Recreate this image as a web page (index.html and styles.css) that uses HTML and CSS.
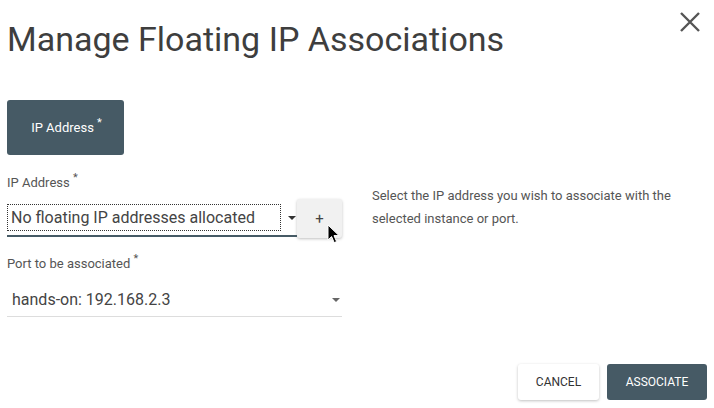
FILE: index.html
```html
<!DOCTYPE html>
<html>
<head>
<meta charset="utf-8">
<link rel="stylesheet" href="styles.css">
</head>
<body>
<div class="dialog">
  <div class="header">
    <h1 class="title">Manage Floating IP Associations</h1>
    <svg class="close" width="22" height="22" viewBox="0 0 22 22"><path d="M2 2L20 20M20 2L2 20" stroke="#555" stroke-width="2.4" fill="none"/></svg>
  </div>
  <div class="tab"><span>IP Address <sup class="req">*</sup></span></div>
  <div class="content">
    <div class="form">
      <div class="label">IP Address <sup class="req">*</sup></div>
      <div class="field-row">
        <div class="select select-focus">
          <div class="select-text">No floating IP addresses allocated</div>
          <span class="caret"></span>
        </div>
        <div class="plus">+</div>
        <svg class="cursor" width="14" height="20" viewBox="0 0 14 20"><path d="M1 1L1 16L4.6 12.6L7.2 18.6L9.6 17.6L7 11.6L12 11.6Z" fill="#000" stroke="#fff" stroke-width="1"/></svg>
      </div>
      <div class="label label-port">Port to be associated <sup class="req">*</sup></div>
      <div class="select select-plain">
        <div class="select-text">hands-on: 192.168.2.3</div>
        <span class="caret"></span>
      </div>
    </div>
    <p class="desc">Select the IP address you wish to associate with the selected instance or port.</p>
  </div>
  <div class="footer">
    <button class="btn btn-cancel">CANCEL</button>
    <button class="btn btn-primary">ASSOCIATE</button>
  </div>
</div>
</body>
</html>
```
FILE: styles.css
```css
html, body {
  margin: 0;
  padding: 0;
  background: #fff;
}
body {
  font-family: Roboto, "Liberation Sans", sans-serif;
  color: #444;
}
.dialog {
  width: 714px;
  height: 408px;
  padding: 0 7px;
  box-sizing: border-box;
}
.header {
  display: flex;
  justify-content: space-between;
  align-items: flex-start;
  height: 100px;
}
.title {
  margin: 19px 0 0 0;
  font-size: 34px;
  font-weight: 400;
  line-height: 40px;
  color: #3e3e3e;
}
.close {
  margin-top: 11px;
  margin-right: 6px;
}
.tab {
  width: 117px;
  height: 55px;
  box-sizing: border-box;
  background: #465a65;
  border-radius: 3px;
  color: #fff;
  font-size: 13px;
  display: flex;
  align-items: center;
  justify-content: center;
  padding-left: 2px;
}
.req {
  font-size: 11px;
  vertical-align: 0;
  position: relative;
  top: -6px;
}
.content {
  display: flex;
  margin-top: 19px;
}
.form {
  width: 335px;
}
.label {
  font-size: 13px;
  line-height: 18px;
  color: #555;
}
.field-row {
  display: flex;
  align-items: flex-start;
  margin-top: 6px;
  position: relative;
}
.select {
  display: flex;
  align-items: center;
  position: relative;
}
.select-focus {
  width: 290px;
  padding: 5px 0 4px 0;
  border-bottom: 2px solid #465a65;
}
.select-focus .select-text {
  width: 274px;
  height: 27px;
  box-sizing: border-box;
  border: 1px dotted #333;
  padding-left: 3px;
}
.select-text {
  font-size: 16px;
  line-height: 25px;
  color: #444;
  white-space: nowrap;
}
.caret {
  width: 0;
  height: 0;
  border-left: 4px solid transparent;
  border-right: 4px solid transparent;
  border-top: 4px solid #333;
  margin-left: 7px;
}
.plus {
  width: 45px;
  height: 39px;
  margin-left: 0;
  background: #f1f1f1;
  border-radius: 3px;
  box-shadow: 0 1px 3px rgba(0,0,0,0.25);
  display: flex;
  align-items: center;
  justify-content: center;
  font-size: 15px;
  color: #444;
  box-sizing: border-box;
}
.cursor {
  position: absolute;
  left: 320px;
  top: 25px;
}
.label-port {
  margin-top: 17px;
}
.select-plain {
  margin-top: 12px;
  width: 335px;
  justify-content: space-between;
  border-bottom: 1px solid #ddd;
  padding-bottom: 3px;
}
.select-plain .select-text {
  padding-left: 5px;
  line-height: 27px;
}
.select-plain .caret {
  border-top-color: #666;
  margin-right: 2px;
}
.desc {
  margin: 10px 0 0 30px;
  width: 320px;
  font-size: 13px;
  line-height: 23px;
  color: #555;
}
.footer {
  display: flex;
  justify-content: flex-end;
  gap: 8px;
  margin-top: 47px;
}
.btn {
  height: 36px;
  border: none;
  border-radius: 3px;
  font-family: Roboto, "Liberation Sans", sans-serif;
  font-size: 12px;
  padding: 0;
}
.btn-cancel {
  width: 81px;
  background: #fff;
  color: #333;
  box-shadow: 0 1px 3px rgba(0,0,0,0.25);
}
.btn-primary {
  width: 100px;
  background: #465a65;
  color: #fff;
}
```
